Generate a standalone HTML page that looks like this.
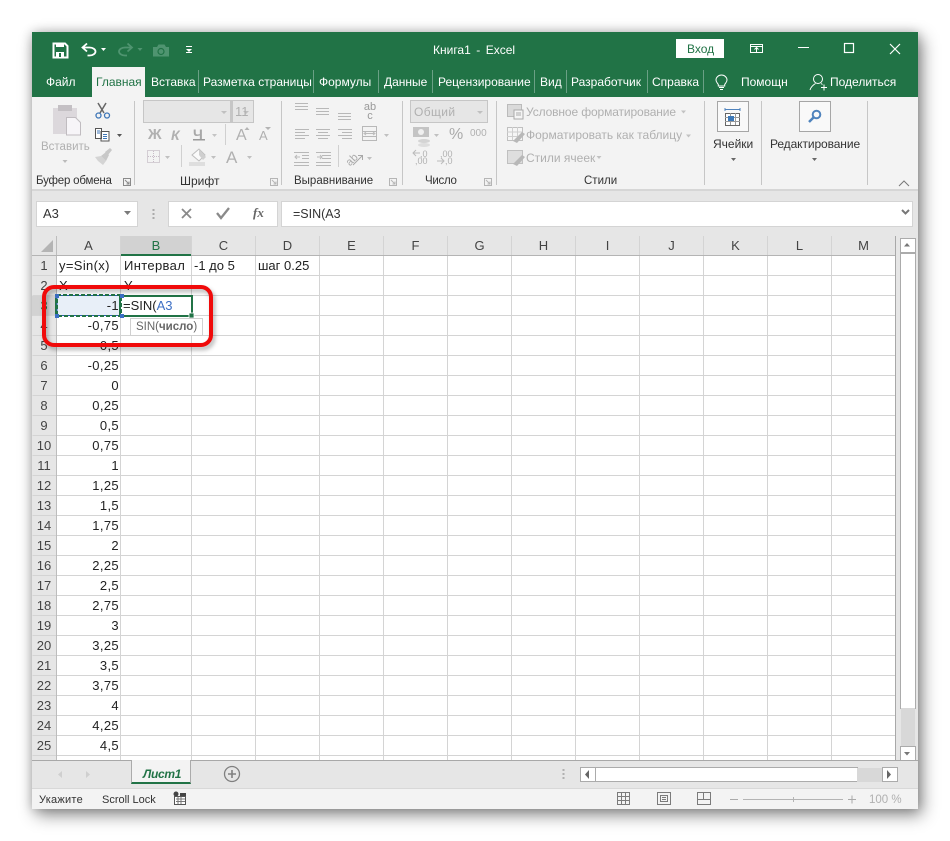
<!DOCTYPE html>
<html><head><meta charset="utf-8">
<style>
html,body{margin:0;padding:0;background:#fff;width:950px;height:841px;overflow:hidden}
#p{position:relative;width:950px;height:841px;overflow:hidden;font-family:"Liberation Sans",sans-serif;color:#333}
.t,.r,.c{position:absolute;white-space:nowrap}
.b{position:absolute}
.t{font-size:12px;line-height:16px}
.w{color:#fff}
.g{color:#b0b0b0}
.l{font-size:11.5px;letter-spacing:-.1px}
.c{font-size:13px;line-height:18px;color:#222;letter-spacing:.35px}
.r{text-align:right;font-size:13px;line-height:18px;color:#222;letter-spacing:.35px;width:62px;left:57px}
.h{position:absolute;width:24px;left:32px;text-align:center;font-size:13px;line-height:18px;color:#444}
.ch{position:absolute;top:237px;text-align:center;font-size:13px;line-height:18px;color:#444}
svg{position:absolute;overflow:visible}
</style></head><body><div id="p">

<!-- window shadow -->
<div class="b" style="left:32px;top:32px;width:886px;height:777px;box-shadow:4px 6px 16px rgba(0,0,0,.45),0 0 10px rgba(0,0,0,.2)"></div>
<!-- title -->
<div class="b" style="left:32px;top:32px;width:886px;height:65px;background:#217346"></div>
<!-- ribbon -->
<div class="b" style="left:32px;top:97px;width:886px;height:92px;background:#f3f3f3"></div>
<div class="b" style="left:32px;top:189px;width:886px;height:2px;background:#d6d6d6"></div>
<div class="b" style="left:32px;top:191px;width:886px;height:45px;background:#e6e6e6"></div>
<div class="b" style="left:92px;top:67px;width:53px;height:30px;background:#f3f3f3"></div>

<!-- QAT -->
<svg style="left:0;top:0" width="950" height="100">
<path d="M53.500 43.500h11.500l2.500 2.500v11.500h-14z" fill="none" stroke="#fff" stroke-width="2"/>
<rect x="56" y="43" width="8" height="4" fill="#fff"/>
<rect x="56" y="52" width="8" height="5" fill="#fff"/><rect x="59" y="53" width="2" height="4" fill="#217346"/>
<path d="M87 43.500l-4.500 4 4.500 4M82.500 47.500h7c3.500 0 6 2 6 4s-2.500 4-6 4h-2" fill="none" stroke="#fff" stroke-width="1.800"/>
<path d="M101 48h5l-2.500 3z" fill="#fff"/>
<path d="M127.500 43.500l4.500 4-4.500 4M132 47.500h-7c-3.500 0-6 2-6 4s2.500 4 6 4h2" fill="none" stroke="#4f9470" stroke-width="1.800"/>
<path d="M137.500 48h5l-2.500 3z" fill="#4f9470"/>
<path d="M153 47h4l1.500-2.500h6l1.500 2.500h3v9.500h-16z" fill="#4f9470"/><circle cx="161" cy="51.500" r="3" fill="none" stroke="#217346" stroke-width="1.200"/>
<rect x="186" y="46" width="6" height="1" fill="#fff"/><path d="M186 49h6l-3 3z" fill="#fff"/><rect x="186" y="52" width="6" height="1" fill="#fff"/>
<!-- tab separators -->
<g fill="#6aa085">
<rect x="198" y="70" width="1" height="23"/><rect x="313" y="70" width="1" height="23"/><rect x="378" y="70" width="1" height="23"/><rect x="432" y="70" width="1" height="23"/><rect x="534" y="70" width="1" height="23"/><rect x="566" y="70" width="1" height="23"/><rect x="647" y="70" width="1" height="23"/><rect x="703" y="70" width="1" height="23"/>
</g>
<!-- sign in etc -->
<rect x="676" y="39" width="48" height="19" fill="#fff"/>
<g fill="none" stroke="#fff" stroke-width="1">
<rect x="750.500" y="44.500" width="12" height="8"/><path d="M750 46.500h13M756.500 52v-4M754.500 49.500l2-2 2 2"/>
<rect x="844.500" y="43.500" width="9" height="9" stroke-width="1.200"/>
<path d="M890 44l10 10M900 44l-10 10" stroke-width="1.200"/>
<path d="M721.500 75c3 0 5.500 2.200 5.500 5 0 2-1.500 3-2.300 4.500v1.500h-6.400v-1.500c-.8-1.500-2.300-2.500-2.300-4.500 0-2.800 2.500-5 5.500-5zM719 87.500h5M720 89.500h3"/>
<circle cx="818" cy="79" r="4.500"/><path d="M810 90c1-3.500 3-5 5.500-6.500M821 83.500l1.500 1M821 87.500h6M824 84.500v6"/>
</g>
<rect x="798" y="47" width="11" height="1" fill="#fff"/>
</svg>
<div class="t w" style="left:433px;top:42px;word-spacing:-.6px">Книга1 &nbsp;-&nbsp; Excel</div>
<div class="t" style="left:687px;top:41px;color:#217346">Вход</div>
<div class="t w" style="left:46px;top:74px">Файл</div>
<div class="t" style="left:96px;top:74px;color:#217346">Главная</div>
<div class="t w" style="left:151px;top:74px">Вставка</div>
<div class="t w" style="left:203px;top:74px">Разметка страницы</div>
<div class="t w" style="left:319px;top:74px">Формулы</div>
<div class="t w" style="left:384px;top:74px">Данные</div>
<div class="t w" style="left:438px;top:74px">Рецензирование</div>
<div class="t w" style="left:540px;top:74px">Вид</div>
<div class="t w" style="left:571px;top:74px">Разработчик</div>
<div class="t w" style="left:652px;top:74px">Справка</div>
<div class="t w" style="left:741px;top:74px">Помощн</div>
<div class="t w" style="left:830px;top:74px">Поделиться</div>

<!-- ribbon separators and graphics -->
<svg style="left:0;top:0" width="950" height="240">
<g fill="#c6c6c6">
<rect x="134" y="101" width="1" height="84"/><rect x="281" y="101" width="1" height="84"/><rect x="402" y="101" width="1" height="84"/><rect x="496" y="101" width="1" height="84"/><rect x="704" y="101" width="1" height="84"/><rect x="761" y="101" width="1" height="84"/><rect x="867" y="101" width="1" height="84"/>
</g>
<!-- clipboard -->
<rect x="53" y="108" width="24" height="26" fill="#dcd8dc"/><rect x="58" y="105" width="14" height="6" fill="#c4c0c4"/>
<path d="M66.500 117.500h9l5 5v12.500h-14z" fill="#f7f5f8" stroke="#c0bcc0"/>
<path d="M98 103l6 10M106 103l-6 10" stroke="#666" stroke-width="1.500" fill="none"/>
<circle cx="98.500" cy="115.500" r="2.500" fill="none" stroke="#3f77b8" stroke-width="1.300"/><circle cx="107" cy="115.500" r="2.500" fill="none" stroke="#3f77b8" stroke-width="1.300"/>
<path d="M95.500 128.500h6v10h-6zM101 131.500h8v9.500h-8z" fill="#fff" stroke="#555"/>
<path d="M103 134.500h4M103 136.500h4M103 138.500h4M97 131h3M97 133h3" stroke="#3f77b8"/>
<path d="M117 134h5l-2.500 3z" fill="#555"/>
<!-- brush -->
<path d="M95 157l6-1 5 5-3 4-5-4z" fill="#d4d4d4"/><path d="M101 156l5-4 3 3-3 6z" fill="#c8c8c8"/><path d="M105 152l5-4 2 2-4 5z" fill="#c8c8c8"/>
<path d="M62.500 160h5l-2.500 3z" fill="#bbb"/>
<!-- launcher icons -->
<g fill="none" stroke="#8a8a8a"><rect x="123.500" y="178.500" width="7" height="7"/><path d="M125 180l4 4M129 181.500v2.500h-2.500"/></g>
<g fill="none" stroke="#b5b5b5"><rect x="270.500" y="178.500" width="7" height="7"/><path d="M272 180l4 4M276 181.500v2.500h-2.500"/><rect x="389.500" y="178.500" width="7" height="7"/><path d="M391 180l4 4M395 181.500v2.500h-2.500"/><rect x="484.500" y="178.500" width="7" height="7"/><path d="M486 180l4 4M490 181.500v2.500h-2.500"/></g>
<!-- font -->
<rect x="143.500" y="100.500" width="87" height="22" fill="#e6e6e6" stroke="#c6c6c6"/>
<rect x="232.500" y="100.500" width="21" height="22" fill="#e6e6e6" stroke="#c6c6c6" />
<rect x="230" y="100" width="3" height="23" fill="#c6c6c6"/>
<path d="M221 111h6l-3 3zM243 111h6l-3 3z" fill="#c0c0c0"/>
<rect x="193" y="139" width="12" height="1.500" fill="#9a9a9a"/>
<path d="M212 134h5l-2.500 3z" fill="#c4c4c4"/>
<rect x="225" y="124" width="1" height="21" fill="#d0d0d0"/>
<path d="M244.500 130l2.500-3 2.500 3zM265 127h6l-3 3z" fill="#b4b4b4"/>
<rect x="147.500" y="150.500" width="12" height="12" fill="none" stroke="#b5a8b5" stroke-dasharray="1 1"/>
<path d="M148 156.500h12M153.500 151v12" stroke="#c8bcc8" stroke-dasharray="1 1"/>
<path d="M165 156h5l-2.500 3zM211 156h5l-2.500 3zM247 156h5l-2.500 3z" fill="#c0c0c0"/>
<rect x="181" y="145" width="1" height="22" fill="#d0d0d0"/>
<path d="M192 155l7-6 6 6-6 6z" fill="#fafafa" stroke="#bdbdbd"/><path d="M199 149l7 8-3 3-4-5z" fill="#cfcfcf"/>
<rect x="189" y="162" width="16" height="4" fill="#dedede"/>
<!-- alignment -->
<g stroke="#b8b8b8" fill="none">
<path d="M295 103.500h13M295 106.500h13M295 109.500h13"/>
<path d="M316 108.500h13M316 111.500h13M316 114.500h13"/>
<path d="M338 113.500h13M338 116.500h13M338 119.500h13"/>
<path d="M295 129.500h14M295 132.500h10M295 135.500h14M295 138.500h10"/>
<path d="M316 129.500h14M318 132.500h10M316 135.500h14M318 138.500h10"/>
<path d="M338 129.500h14M342 132.500h10M338 135.500h14M342 138.500h10"/>
<rect x="362.500" y="126.500" width="14" height="14"/><path d="M363 131.500h13M363 136.500h13"/>
<path d="M294 152.500h15M302 155.500h7M302 158.500h7M294 162.500h15M294 165.500h15"/>
<path d="M316 152.500h15M322 155.500h9M322 158.500h9M316 162.500h15M316 165.500h15"/>
<path d="M353 165l9-9M358 155.500h4.500v4.500" stroke="#a8a8a8"/>
</g>
<path d="M295 157h5M297 155l-2 2 2 2M317 157h5M320 155l2 2-2 2" stroke="#bbb" fill="none"/>
<path d="M384 134h5l-2.500 3zM367 157h5l-2.500 3z" fill="#c0c0c0"/>
<path d="M365 133.500h9M366 132l-2 1.500 2 1.500M373 132l2 1.500-2 1.500" stroke="#bbb" fill="none"/>
<rect x="338" y="145" width="1" height="22" fill="#d0d0d0"/>
<!-- number -->
<rect x="410.500" y="100.500" width="77" height="22" fill="#e6e6e6" stroke="#c6c6c6"/>
<path d="M477 111h6l-3 3z" fill="#c0c0c0"/>
<rect x="413" y="127" width="16" height="10" fill="#c4c4c4"/><circle cx="421" cy="132" r="3" fill="#f0f0f0"/>
<ellipse cx="424" cy="141" rx="6" ry="2" fill="#d4d4d4"/><ellipse cx="424" cy="145" rx="6" ry="2" fill="#dedede"/>
<path d="M434 134h5l-2.500 3z" fill="#c0c0c0"/>
<path d="M420 153h-7M416 150l-3 3 3 3M437 161h7M441 158l3 3-3 3" fill="none" stroke="#bbb"/>
<!-- styles -->
<rect x="507.500" y="104.500" width="14" height="12" fill="#dadada" stroke="#bbb"/><rect x="514" y="110" width="9" height="9" fill="#f5f5f5" stroke="#aaa"/>
<path d="M516 113h5M516 115h5" stroke="#aaa"/>
<rect x="507.500" y="127.500" width="15" height="13" fill="#f6f6f6" stroke="#c0c0c0"/><path d="M507 132h15M507 136.500h15M512.500 127v13M517.500 127v13" stroke="#cfcfcf"/><path d="M513 141l9-9 3 2-8 9z" fill="#b8b8b8"/>
<rect x="507.500" y="150.500" width="15" height="13" fill="#dedede" stroke="#c0c0c0"/><path d="M513 164l9-9 3 2-8 9z" fill="#b8b8b8"/>
<path d="M681 110.500h5l-2.500 3zM686 134.500h5l-2.500 3zM596.500 156h5l-2.500 3z" fill="#c2c2c2"/>
<!-- cells button -->
<rect x="717.500" y="101.500" width="31" height="30" fill="#f9f9f9" stroke="#a6a6a6"/>
<path d="M725 109.500h15M725 108v3M740 108v3" stroke="#4f83bd" fill="none"/>
<rect x="725.500" y="113.500" width="14" height="12" fill="#fff" stroke="#666"/>
<path d="M725 117.500h15M725 121.500h15M730.500 113v12M735.500 113v12" stroke="#999"/>
<rect x="728" y="116" width="6" height="5" fill="#3c78b8"/>
<path d="M731 158h5l-2.500 3zM812 158h5l-2.500 3z" fill="#666"/>
<!-- find button -->
<rect x="799.500" y="101.500" width="31" height="30" fill="#f9f9f9" stroke="#a6a6a6"/>
<circle cx="816.500" cy="114.500" r="3.800" fill="none" stroke="#4f83bd" stroke-width="2"/><path d="M813.500 117.500l-4.500 4.500" stroke="#4f83bd" stroke-width="2.500" fill="none"/>
<path d="M899 186l5-5 5 5" fill="none" stroke="#777"/>
</svg>
<span class="t" style="left:148px;top:127px;font-size:15px;font-weight:bold;color:#b0b0b0">Ж</span>
<span class="t" style="left:171px;top:127px;font-size:14px;font-weight:bold;font-style:italic;color:#b0b0b0">К</span>
<span class="t" style="left:193px;top:126px;font-size:14px;font-weight:bold;color:#a8a8a8">Ч</span>
<span class="t" style="left:236px;top:127px;font-size:16px;color:#b0b0b0;line-height:18px">A</span>
<span class="t" style="left:259px;top:128px;font-size:13px;color:#b0b0b0">A</span>
<span class="t" style="left:226px;top:147px;font-size:17px;color:#b0b0b0;line-height:22px">A</span>
<div class="t g" style="left:235px;top:104px;font-size:13px">11</div>
<div class="t g" style="left:41px;top:139px;font-size:11.500px">Вставить</div>
<div class="t l" style="left:36px;top:173px;letter-spacing:-.2px">Буфер обмена</div>
<div class="t" style="left:180px;top:173px">Шрифт</div>
<div class="t l" style="left:294px;top:173px;letter-spacing:0">Выравнивание</div>
<div class="t l" style="left:425px;top:173px;letter-spacing:-.3px">Число</div>
<div class="t l" style="left:584px;top:173px;letter-spacing:0">Стили</div>
<div class="t" style="left:363px;top:103px;font-size:11px;line-height:9px;color:#999;width:14px;text-align:center">ab<br>c</div>
<div class="t" style="left:346px;top:152px;font-size:11px;color:#aaa;transform:rotate(-45deg)">ab</div>
<div class="t g" style="left:414px;top:104px;font-size:12px;letter-spacing:.4px">Общий</div>
<div class="t g" style="left:449px;top:125px;font-size:16px;line-height:20px;color:#aaa">%</div>
<div class="t g" style="left:470px;top:126px;font-size:10px">000</div>
<div class="t g" style="left:420px;top:146px;font-size:9px">,0</div>
<div class="t g" style="left:415px;top:153px;font-size:9px">,00</div>
<div class="t g" style="left:440px;top:146px;font-size:9px">,00</div>
<div class="t g" style="left:445px;top:153px;font-size:9px">,0</div>
<div class="t g" style="left:526px;top:104px;letter-spacing:-.12px">Условное форматирование</div>
<div class="t g" style="left:526px;top:127px">Форматировать как таблицу</div>
<div class="t g" style="left:526px;top:150px">Стили ячеек</div>
<div class="t" style="left:713px;top:136px">Ячейки</div>
<div class="t" style="left:770px;top:136px;letter-spacing:-.1px">Редактирование</div>

<!-- formula bar -->
<div class="b" style="left:36px;top:201px;width:100px;height:24px;background:#fff;border:1px solid #d4d4d4"></div>
<div class="b" style="left:168px;top:201px;width:108px;height:24px;background:#fff;border:1px solid #d4d4d4"></div>
<div class="b" style="left:281px;top:201px;width:630px;height:24px;background:#fff;border:1px solid #d4d4d4"></div>
<div class="t" style="left:43px;top:206px;font-size:13px">A3</div>
<div class="t" style="left:293px;top:206px;font-size:12.500px">=SIN(A3</div>
<div class="t" style="left:253px;top:205px;font-size:13px;font-style:italic;font-weight:bold;font-family:'Liberation Serif',serif;color:#666">fx</div>
<svg style="left:0;top:0" width="950" height="240">
<path d="M124 211h7l-3.500 4z" fill="#7a7a7a"/>
<path d="M153.500 209v2M153.500 213v2M153.500 217v2" stroke="#aaa" stroke-width="2" fill="none"/>
<path d="M182 209l9 9M191 209l-9 9" stroke="#8a8a8a" stroke-width="1.800" fill="none"/>
<path d="M217 213l4 5 8-10" stroke="#8a8a8a" stroke-width="2.300" fill="none"/>
<path d="M902 210l3.500 3.500 3.500-3.500" stroke="#777" stroke-width="2" fill="none"/>
</svg>

<!-- grid -->
<div class="b" style="left:32px;top:236px;width:864px;height:524px;background:#fff"></div>
<div class="b" style="left:32px;top:236px;width:864px;height:19px;background:#e6e6e6"></div>
<div class="b" style="left:32px;top:236px;width:24px;height:524px;background:#e6e6e6"></div>
<div class="b" style="left:121px;top:236px;width:70px;height:19px;background:#d2d2d2"></div>
<div class="b" style="left:32px;top:296px;width:24px;height:20px;background:#d2d2d2"></div>
<svg style="left:0;top:0" width="950" height="841">
<path d="M53 240v12H41z" fill="#b4b4b4"/>
<g stroke="#d4d4d4" fill="none">
<path d="M32.500 275.500H896M32.500 295.500H896M32.500 315.500H896M32.500 335.500H896M32.500 355.500H896M32.500 375.500H896M32.500 395.500H896M32.500 415.500H896M32.500 435.500H896M32.500 455.500H896M32.500 475.500H896M32.500 495.500H896M32.500 515.500H896M32.500 535.500H896M32.500 555.500H896M32.500 575.500H896M32.500 595.500H896M32.500 615.500H896M32.500 635.500H896M32.500 655.500H896M32.500 675.500H896M32.500 695.500H896M32.500 715.500H896M32.500 735.500H896M32.500 755.500H896"/>
<path d="M120.500 236V760M191.500 236V760M255.500 236V760M319.500 236V760M383.500 236V760M447.500 236V760M511.500 236V760M575.500 236V760M639.500 236V760M703.500 236V760M767.500 236V760M831.500 236V760"/>
</g>
<path d="M56.500 236V760" stroke="#bdbdbd" fill="none"/>
<path d="M32 255.500H896" stroke="#b4b4b4" fill="none"/>
<path d="M895.500 236V760" stroke="#a8a8a8" fill="none"/>
<rect x="121" y="254" width="70" height="2" fill="#217346"/>
<rect x="55" y="296" width="2" height="20" fill="#217346"/>
</svg>

<div class="ch" style="left:57px;width:63px">A</div>
<div class="ch" style="left:121px;width:70px;color:#217346">B</div>
<div class="ch" style="left:192px;width:63px">C</div>
<div class="ch" style="left:256px;width:63px">D</div>
<div class="ch" style="left:320px;width:63px">E</div>
<div class="ch" style="left:384px;width:63px">F</div>
<div class="ch" style="left:448px;width:63px">G</div>
<div class="ch" style="left:512px;width:63px">H</div>
<div class="ch" style="left:576px;width:63px">I</div>
<div class="ch" style="left:640px;width:63px">J</div>
<div class="ch" style="left:704px;width:63px">K</div>
<div class="ch" style="left:768px;width:63px">L</div>
<div class="ch" style="left:832px;width:63px">M</div>

<div class="h" style="top:257px">1</div><div class="h" style="top:277px">2</div><div class="h" style="top:297px;color:#217346">3</div><div class="h" style="top:317px">4</div><div class="h" style="top:337px">5</div><div class="h" style="top:357px">6</div><div class="h" style="top:377px">7</div><div class="h" style="top:397px">8</div><div class="h" style="top:417px">9</div><div class="h" style="top:437px">10</div><div class="h" style="top:457px">11</div><div class="h" style="top:477px">12</div><div class="h" style="top:497px">13</div><div class="h" style="top:517px">14</div><div class="h" style="top:537px">15</div><div class="h" style="top:557px">16</div><div class="h" style="top:577px">17</div><div class="h" style="top:597px">18</div><div class="h" style="top:617px">19</div><div class="h" style="top:637px">20</div><div class="h" style="top:657px">21</div><div class="h" style="top:677px">22</div><div class="h" style="top:697px">23</div><div class="h" style="top:717px">24</div><div class="h" style="top:737px">25</div>

<div class="c" style="left:59px;top:257px">y=Sin(x)</div>
<div class="c" style="left:124px;top:257px">Интервал</div>
<div class="c" style="left:194px;top:257px;letter-spacing:0">-1 до 5</div>
<div class="c" style="left:258px;top:257px;letter-spacing:0">шаг 0.25</div>
<div class="c" style="left:59px;top:277px">X</div>
<div class="c" style="left:124px;top:277px">Y</div>

<div class="b" style="left:57px;top:296px;width:63px;height:19px;background:#e8eff8"></div>
<div class="r" style="top:297px">-1</div>
<div class="r" style="top:317px">-0,75</div>
<div class="r" style="top:337px">-0,5</div>
<div class="r" style="top:357px">-0,25</div>
<div class="r" style="top:377px">0</div>
<div class="r" style="top:397px">0,25</div>
<div class="r" style="top:417px">0,5</div>
<div class="r" style="top:437px">0,75</div>
<div class="r" style="top:457px">1</div>
<div class="r" style="top:477px">1,25</div>
<div class="r" style="top:497px">1,5</div>
<div class="r" style="top:517px">1,75</div>
<div class="r" style="top:537px">2</div>
<div class="r" style="top:557px">2,25</div>
<div class="r" style="top:577px">2,5</div>
<div class="r" style="top:597px">2,75</div>
<div class="r" style="top:617px">3</div>
<div class="r" style="top:637px">3,25</div>
<div class="r" style="top:657px">3,5</div>
<div class="r" style="top:677px">3,75</div>
<div class="r" style="top:697px">4</div>
<div class="r" style="top:717px">4,25</div>
<div class="r" style="top:737px">4,5</div>

<!-- editing cell -->
<div class="b" style="left:121px;top:296px;width:71px;height:20px;background:#fff"></div>
<svg style="left:0;top:0" width="950" height="841">
<rect x="57" y="295.500" width="63" height="20" fill="none" stroke="#2a5db0" stroke-width="1"/>
<rect x="57" y="295" width="64" height="21" fill="none" stroke="#217346" stroke-width="2" stroke-dasharray="4 2"/>
<rect x="120" y="296" width="72" height="20" fill="none" stroke="#217346" stroke-width="2"/>
<rect x="120" y="294" width="4" height="4" fill="#3c6fc4"/><rect x="120" y="314" width="4" height="4" fill="#3c6fc4"/><rect x="55" y="294" width="4" height="4" fill="#3c6fc4"/><rect x="55" y="314" width="4" height="4" fill="#3c6fc4"/>
<rect x="189" y="313" width="5" height="5" fill="#217346" stroke="#fff" stroke-width=".8"/>
<rect x="130.500" y="318.500" width="72" height="17" fill="#fff" stroke="#d0d0d0"/>
</svg>
<div class="c" style="left:123px;top:297px;letter-spacing:0">=SIN(<span style="color:#3c6fc4">A3</span></div>
<div class="t" style="left:136px;top:319px;color:#666;font-size:11.500px">SIN(<b>число</b>)</div>

<!-- red highlight -->
<svg style="left:0;top:0" width="950" height="841">
<rect x="44" y="287" width="167" height="58" rx="10" ry="10" fill="none" stroke="rgba(0,0,0,.3)" stroke-width="4" transform="translate(2 3)" style="filter:blur(2px)"/>
<rect x="44" y="287" width="167" height="58" rx="10" ry="10" fill="none" stroke="#f00a0a" stroke-width="4"/>
</svg>

<!-- scrollbars -->
<div class="b" style="left:896px;top:236px;width:22px;height:524px;background:#e6e6e6"></div>
<div class="b" style="left:900px;top:238px;width:14px;height:13px;background:#fff;border:1px solid #ababab"></div>
<div class="b" style="left:900px;top:253px;width:14px;height:454px;background:#fff;border:1px solid #ababab"></div>
<div class="b" style="left:901px;top:708px;width:14px;height:38px;background:#d8d8d8"></div>
<div class="b" style="left:900px;top:746px;width:14px;height:13px;background:#fff;border:1px solid #ababab"></div>
<div class="b" style="left:32px;top:760px;width:886px;height:29px;background:#e6e6e6;border-top:1px solid #a8a8a8;box-sizing:border-box"></div>
<div class="b" style="left:131px;top:760px;width:60px;height:24px;background:#f3f3f3;border-left:1px solid #ababab;border-right:1px solid #ababab;box-sizing:border-box;border-bottom:2px solid #217346"></div>
<div class="t" style="left:143px;top:766px;font-size:12px;font-weight:bold;font-style:italic;color:#217346;letter-spacing:-.3px">Лист1</div>
<div class="b" style="left:580px;top:767px;width:14px;height:13px;background:#fff;border:1px solid #ababab"></div>
<div class="b" style="left:595px;top:767px;width:261px;height:13px;background:#fff;border:1px solid #ababab"></div>
<div class="b" style="left:857px;top:768px;width:26px;height:14px;background:#d8d8d8"></div>
<div class="b" style="left:882px;top:767px;width:14px;height:13px;background:#fff;border:1px solid #ababab"></div>
<svg style="left:0;top:0" width="950" height="841">
<path d="M904 246.500h6l-3-3.500zM904 752h6l-3 3.500z" fill="#777"/>
<path d="M62 771v7l-4-3.500zM86 771v7l4-3.500z" fill="#cfcfcf"/>
<circle cx="232" cy="774" r="7.500" fill="none" stroke="#808080" stroke-width="1.300"/><path d="M228 774h8M232 770v8" stroke="#808080" stroke-width="1.600"/>
<path d="M563.500 769v2M563.500 773v2M563.500 777v2" stroke="#b0b0b0" stroke-width="2"/>
<path d="M589 770v9l-4-4.500zM887 770v9l4-4.500z" fill="#666"/>
</svg>

<!-- status bar -->
<div class="b" style="left:32px;top:788px;width:886px;height:21px;background:#f3f3f3;border-top:1px solid #d8d8d8;box-sizing:border-box"></div>
<div class="t" style="left:39px;top:792px;font-size:11px;letter-spacing:.25px">Укажите</div>
<div class="t" style="left:102px;top:792px;font-size:11px">Scroll Lock</div>
<svg style="left:0;top:0" width="950" height="841">
<circle cx="176" cy="794" r="2.500" fill="#444"/>
<rect x="180" y="793" width="6" height="3" fill="#444"/>
<rect x="174.500" y="796.500" width="11" height="8" fill="#fff" stroke="#555"/>
<path d="M176 799h9M176 801.500h9M178 797v7M181 797v7" stroke="#777"/>
<g fill="none" stroke="#7b7b7b">
<rect x="617.500" y="792.500" width="12" height="12"/><path d="M621.500 792v12M625.500 792v12M617 796.500h12M617 800.500h12"/>
<rect x="657.500" y="792.500" width="13" height="12"/><rect x="660.500" y="795.500" width="7" height="6"/><path d="M662 797.500h4M662 799.500h4"/>
<path d="M697.500 792.500h13v12h-13zM697 799.500h13M703.500 792v7"/>
</g>
<path d="M730 799.500h8" stroke="#aaa"/>
<path d="M743 799.500h100M793.500 797v5" stroke="#b4b4b4" fill="none"/>
<path d="M848 799.500h8M852 795.500v8" stroke="#aaa" fill="none"/>
</svg>
<div class="t" style="left:869px;top:792px;font-size:11.500px;color:#b0b0b0">100 %</div>

</div></body></html>
